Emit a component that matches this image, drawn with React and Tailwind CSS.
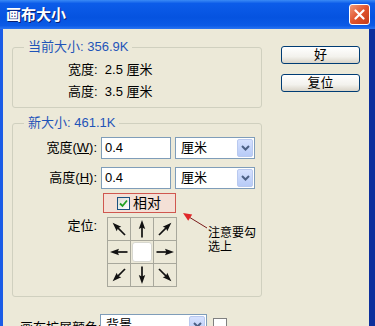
import React from "react";

function Arrow({ angle }) {
  return (
    <svg width="22" height="22" viewBox="0 0 22 22">
      <g transform={`rotate(${angle} 11 11)`}>
        <line x1="11" y1="19.5" x2="11" y2="8" stroke="#111" strokeWidth="1.7" />
        <polygon points="11,2 7.8,11 11,9.6 14.2,11" fill="#111" />
      </g>
    </svg>
  );
}

function Chevron() {
  return (
    <svg width="9" height="6" viewBox="0 0 9 6">
      <polyline points="1,1 4.5,4.5 8,1" fill="none" stroke="#4d6185" strokeWidth="2" />
    </svg>
  );
}

function Select({ text, w }) {
  return (
    <div className={`${w} h-[22px] bg-white border border-[#7f9db9] flex items-center justify-between pl-[5px] pr-px`}>
      <span className="text-[13px] leading-[16px] text-black">{text}</span>
      <div className="w-[16px] h-[18px] rounded-[2px] border border-[#b9c9ef] bg-[linear-gradient(to_bottom,#d6e1fe,#b7cbf7)] flex items-center justify-center">
        <Chevron />
      </div>
    </div>
  );
}

function XPButton({ children }) {
  return (
    <div className="w-[79px] h-[18px] rounded-[3px] border border-[#003c74] bg-[linear-gradient(to_bottom,#ffffff,#f3f2ed_60%,#d9d4c8)] flex items-center justify-center text-[13px] leading-[16px] text-black">
      {children}
    </div>
  );
}

export default function App() {
  const arrows = [-45, 0, 45, -90, null, 90, -135, 180, 135];
  return (
    <div className="w-[375px] h-[326px] overflow-hidden flex flex-col font-['Liberation_Sans','Noto_Sans_CJK_SC',sans-serif]">
      {/* Title bar */}
      <div className="h-[29px] shrink-0 flex items-center justify-between pl-[6px] pr-[5px] bg-[linear-gradient(to_bottom,#3a8af5_0%,#0c5ce9_12%,#0553e0_60%,#0b5ae6_88%,#2a74f2_100%)]">
        <span className="text-white font-bold text-[15px] leading-[18px] [text-shadow:1px_1px_0_#0a1e70]">画布大小</span>
        <div className="w-[21px] h-[21px] rounded-[3px] border border-white bg-[linear-gradient(to_bottom_right,#f29a7a,#e0532c_50%,#c43c1a)] flex items-center justify-center">
          <svg width="11" height="11" viewBox="0 0 11 11">
            <path d="M1.5 1.5 L9.5 9.5 M9.5 1.5 L1.5 9.5" stroke="white" strokeWidth="2.2" strokeLinecap="round" />
          </svg>
        </div>
      </div>

      {/* Body */}
      <div className="flex-1 flex bg-[#ece9d8] border-l-[3px] border-l-[#1b5ce6] border-r-[6px] border-r-[#0c2f9c]">
        {/* Left column */}
        <div className="pl-[9px] w-[259px] shrink-0 flex flex-col">
          {/* Group 1 */}
          <div className="relative mt-[18px] h-[61px] border border-[#d0d0bf] rounded-[3px]">
            <span className="absolute left-[11px] -top-[9px] px-[4px] bg-[#ece9d8] text-[13px] leading-[16px] text-[#1f54b8]">当前大小: 356.9K</span>
            <div className="pl-[55px] pt-[11px] text-[13px] leading-[22px] text-black">
              <div>宽度:&nbsp;&nbsp;2.5 厘米</div>
              <div>高度:&nbsp;&nbsp;3.5 厘米</div>
            </div>
          </div>

          {/* Group 2 */}
          <div className="relative mt-[15px] h-[174px] border border-[#d0d0bf] rounded-[3px]">
            <span className="absolute left-[11px] -top-[9px] px-[4px] bg-[#ece9d8] text-[13px] leading-[16px] text-[#1f54b8]">新大小: 461.1K</span>

            <div className="mt-[13px] flex items-center">
              <div className="w-[84px] text-right text-[13px] leading-[16px] text-black">宽度(<span className="underline">W</span>):</div>
              <div className="ml-[4px] w-[70px] h-[22px] bg-white border border-[#7f9db9] flex items-center pl-[3px] text-[13px] text-black">0.4</div>
              <div className="ml-[4px]"><Select text="厘米" w="w-[80px]" /></div>
            </div>

            <div className="mt-[8px] flex items-center">
              <div className="w-[84px] text-right text-[13px] leading-[16px] text-black">高度(<span className="underline">H</span>):</div>
              <div className="ml-[4px] w-[70px] h-[22px] bg-white border border-[#7f9db9] flex items-center pl-[3px] text-[13px] text-black">0.4</div>
              <div className="ml-[4px]"><Select text="厘米" w="w-[80px]" /></div>
            </div>

            <div className="mt-[4px] ml-[90px] w-[73px] h-[20px] border-[1.5px] border-[#d0574f] bg-[#f4e0d6] flex items-center pl-[13px] gap-[3px]">
              <div className="w-[13px] h-[13px] border border-[#1c5180] bg-[linear-gradient(to_bottom_right,#dcdcd7,#ffffff)] flex items-center justify-center">
                <svg width="9" height="9" viewBox="0 0 9 9">
                  <polyline points="1,4.5 3.5,7 8,1.5" fill="none" stroke="#21a121" strokeWidth="1.8" />
                </svg>
              </div>
              <span className="text-[14px] leading-[16px] text-black">相对</span>
            </div>

            <div className="mt-[4px] flex items-start">
              <div className="w-[84px] text-right text-[13px] leading-[16px] text-black mt-[1px]">定位:</div>
              <div className="ml-[10px] grid grid-cols-[repeat(3,22px)] gap-px bg-[#a8a89c] p-px">
                {arrows.map((a, i) => (
                  <div key={i} className="w-[22px] h-[22px] bg-[#ece9d8] flex items-center justify-center">
                    {a === null ? (
                      <div className="w-[20px] h-[20px] bg-white rounded-[3px] border border-[#d8d8d0]" />
                    ) : (
                      <Arrow angle={a} />
                    )}
                  </div>
                ))}
              </div>
              <div className="ml-[31px] mt-[9px] whitespace-nowrap text-[12px] leading-[14px] text-black">
                <div>注意要勾</div>
                <div>选上</div>
              </div>
            </div>

            {/* annotation arrow */}
            <svg className="absolute left-[168px] top-[86px]" width="30" height="22" viewBox="0 0 30 22">
              <line x1="8" y1="7" x2="26" y2="18" stroke="#7a1a1a" strokeWidth="1" />
              <polygon points="2,3 11.2,4.5 7.2,10.8" fill="#e0282a" />
            </svg>
          </div>

          {/* Bottom row */}
          <div className="mt-[17px] flex items-start">
            <div className="ml-[8px] w-[80px] mt-[6px] whitespace-nowrap text-[13px] leading-[16px] text-black">画布扩展颜色:</div>
            <div className="w-[107px]"><Select text="背景" w="w-[107px]" /></div>
            <div className="ml-[6px] mt-[4px] w-[14px] h-[14px] bg-white border border-[#808080]" />
          </div>
        </div>

        {/* Right column */}
        <div className="ml-[19px] pt-[17px] flex flex-col gap-[10px]">
          <XPButton>好</XPButton>
          <XPButton>复位</XPButton>
        </div>
      </div>
    </div>
  );
}
